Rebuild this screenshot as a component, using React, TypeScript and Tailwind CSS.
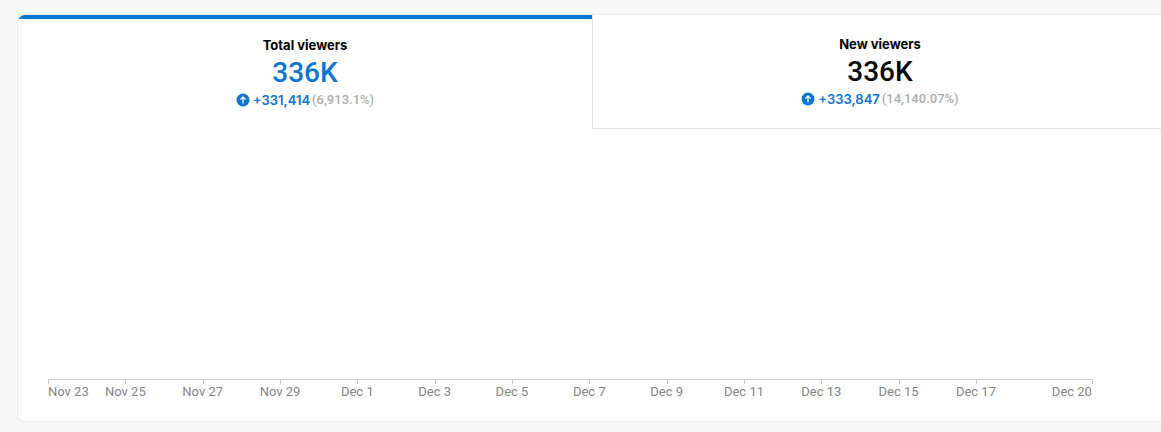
import { useState } from "react";

type Metric = { label: string; value: string; change: string; percent: string };
type Tick = { label: string; days: number };

const metrics: Metric[] = [
  { label: "Total viewers", value: "336K", change: "+331,414", percent: "(6,913.1%)" },
  { label: "New viewers", value: "336K", change: "+333,847", percent: "(14,140.07%)" },
];

const ticks: Tick[] = [
  { label: "Nov 23", days: 2 },
  { label: "Nov 25", days: 2 },
  { label: "Nov 27", days: 2 },
  { label: "Nov 29", days: 2 },
  { label: "Dec 1", days: 2 },
  { label: "Dec 3", days: 2 },
  { label: "Dec 5", days: 2 },
  { label: "Dec 7", days: 2 },
  { label: "Dec 9", days: 2 },
  { label: "Dec 11", days: 2 },
  { label: "Dec 13", days: 2 },
  { label: "Dec 15", days: 2 },
  { label: "Dec 17", days: 3 },
  { label: "Dec 20", days: 0 },
];

function UpIcon() {
  return (
    <svg viewBox="0 0 14 14" className="mr-[3px] size-3.5 shrink-0" aria-hidden="true">
      <circle cx="7" cy="7" r="6.5" fill="#0b75d1" />
      <path d="M7 10.4V4.2M4.3 6.6 7 3.9l2.7 2.7" fill="none" stroke="#fff" strokeWidth="1.3" />
    </svg>
  );
}

function MetricTab({ metric, selected, onSelect }: { metric: Metric; selected: boolean; onSelect: () => void }) {
  return (
    <button
      type="button"
      role="tab"
      aria-selected={selected}
      onClick={onSelect}
      className={
        "flex h-[114px] min-w-0 flex-1 flex-col items-center " +
        (selected ? "border-t-4 border-[#0b75d1] pt-3.5" : "border-b border-l border-[#e0e0e0] pt-[17px]")
      }
    >
      <span className="font-['Inter',sans-serif] text-[13px] leading-6 font-bold text-black">{metric.label}</span>
      <span className={"text-[28px] leading-8 font-medium " + (selected ? "text-[#0b75d1]" : "text-black")}>
        {metric.value}
      </span>
      <span className="flex items-center text-[13px] leading-[22px] font-medium">
        <UpIcon />
        <span className="font-['Inter',sans-serif] font-semibold text-[#0b75d1]">{metric.change}</span>
        <span className="ml-0.5 text-[#adadad]">{metric.percent}</span>
      </span>
    </button>
  );
}

function align(index: number) {
  if (index === 0) return "justify-start";
  if (index === ticks.length - 1) return "justify-end";
  return "justify-center";
}

export default function App() {
  const [active, setActive] = useState(0);
  return (
    <main className="overflow-hidden bg-[#f8f8f8] pt-3.5 pb-2.5 pl-[17px] font-['Roboto',sans-serif]">
      <section className="-mr-[7px] overflow-hidden rounded-lg border border-[#ebebeb] bg-white">
        <div role="tablist" aria-label="Viewer metrics" className="flex">
          {metrics.map((metric, i) => (
            <MetricTab key={metric.label} metric={metric} selected={i === active} onSelect={() => setActive(i)} />
          ))}
        </div>
        <div role="tabpanel" aria-label={metrics[active].label} className="pt-[250px] pr-[74px] pb-[21px] pl-[30px]">
          <div className="flex border-t border-r border-[#c8c8c8] [border-right-color:transparent]">
            {ticks.map((tick, i) => (
              <div key={tick.label} className="min-w-0 basis-0" style={{ flexGrow: tick.days }}>
                <div className="h-1 w-px bg-[#c8c8c8]" />
                <div className={"flex w-0 text-[13px] leading-4 whitespace-nowrap text-[#858585] " + align(i)}>
                  <span>{tick.label}</span>
                </div>
              </div>
            ))}
          </div>
        </div>
      </section>
    </main>
  );
}
